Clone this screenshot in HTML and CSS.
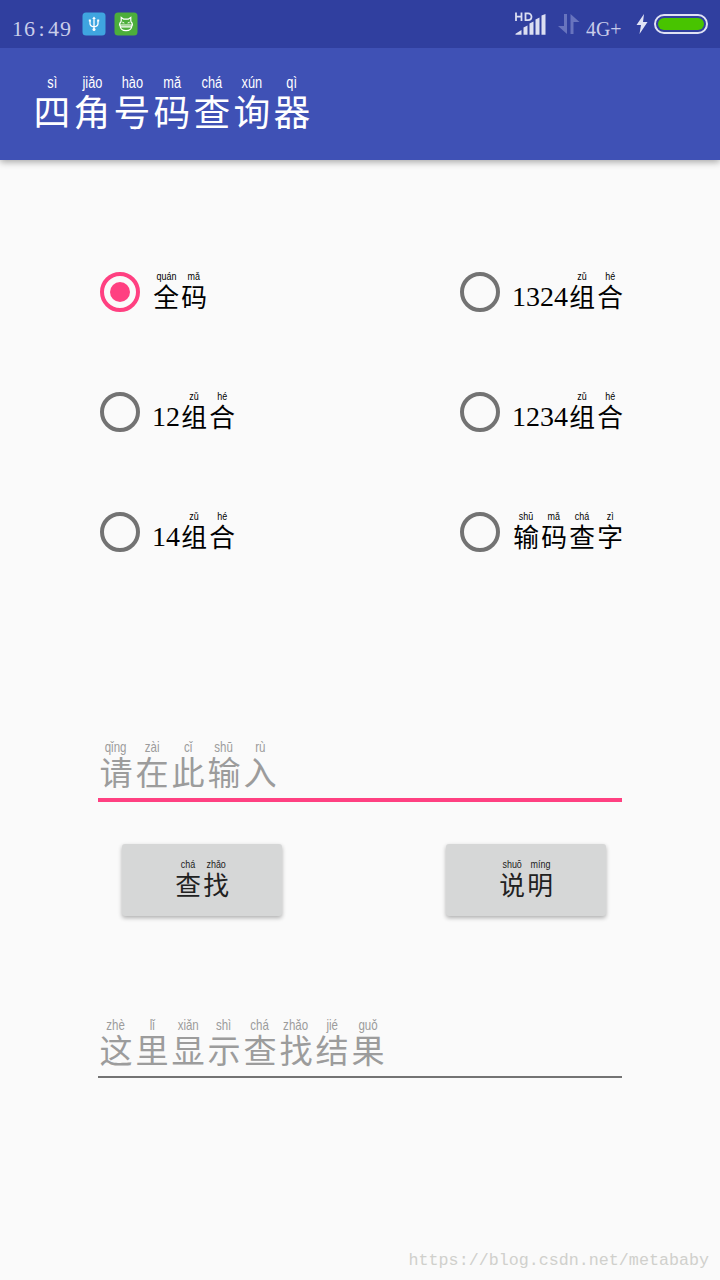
FILE: index.html
```html
<!DOCTYPE html>
<html lang="zh-CN">
<head>
    <meta charset="UTF-8">
    <title>四角号码查询器</title>
    <link rel="stylesheet" href="styles.css">
</head>
<body>
    <div class="status-bar">
        <span class="clock">16<span class="colon">:</span>49</span>
        <svg class="app-icon" width="24" height="24" viewBox="0 0 24 24">
            <rect x="0.5" y="0.5" width="23" height="23" rx="3.5" fill="#3fa5e0" />
            <path d="M12 6v12M8 8.500v3q0 3 4 3.300q4-.3 4-3.300v-3" fill="none" stroke="#fff" stroke-width="1.300" />
            <path d="M12 4.500l1.800 2.500h-3.600zM6.800 7.500h2v2h-2zM15.200 7.500h2v2h-2z" fill="#fff" />
            <circle cx="12" cy="17.500" r="1.500" fill="#fff" />
        </svg>
        <svg class="app-icon" width="24" height="24" viewBox="0 0 24 24">
            <rect x="0.5" y="0.5" width="23" height="23" rx="3.5" fill="#4cae3b" />
            <path d="M7.200 9.500V5.500l2.500 1.700h4.600l2.500-1.700v4M7.200 9.500Q5.500 11 5.500 13h13Q18.500 11 16.800 9.500M6 13.500Q6.500 18.700 12 18.700T18 13.500M6.500 14.800h11" fill="none" stroke="#fff" stroke-width="1.200" />
            <path d="M8.500 9.500l2.500 1.800H8.500zM15.500 9.500L13 11.300h2.500z" fill="#fff" />
        </svg>
        <span class="spacer"></span>
        <svg class="signal" width="32" height="26" viewBox="0 0 32 26">
            <path d="M1 .5v8.500M6.500 .5v8.500M1 4.700h5.500M10.500 1.400v6.700h2.500c2 0 3.500-1.300 3.500-3.300s-1.500-3.400-3.500-3.400z" fill="none" stroke="#dcdff2" stroke-width="1.800" />
            <path d="M.5 22.800v-1l6-3.800v4.800zM8.500 15.500l4-2v9.300h-4zM14.500 11.500l4-2v13.300h-4zM20.500 7.500l4-2v17.300h-4zM26.500 3.500l4-1.500v20.800h-4z" fill="#dcdff2" />
        </svg>
        <svg class="arrows" width="22" height="20" viewBox="0 0 22 20">
            <path d="M6 0h3v20L0 12h6zM12.500 0l9 8h-6v12h-3z" fill="#6874be" />
        </svg>
        <span class="network"><span class="narrow">4G+</span></span>
        <svg class="bolt" width="12" height="20" viewBox="0 0 12 20">
            <path d="M8 0L.5 11h4.500L3.500 20 11.500 8H7z" fill="#e2e4f5" />
        </svg>
        <span class="battery"><span class="level"></span></span>
    </div>

    <header class="app-bar">
        <h1 class="pinyin-text">
            <span class="zi"><span class="py">sì</span><span class="hz">四</span></span>
            <span class="zi"><span class="py">jiǎo</span><span class="hz">角</span></span>
            <span class="zi"><span class="py">hào</span><span class="hz">号</span></span>
            <span class="zi"><span class="py">mǎ</span><span class="hz">码</span></span>
            <span class="zi"><span class="py">chá</span><span class="hz">查</span></span>
            <span class="zi"><span class="py">xún</span><span class="hz">询</span></span>
            <span class="zi"><span class="py">qì</span><span class="hz">器</span></span>
        </h1>
    </header>

    <main>
        <div class="options">
            <div class="option">
                <span class="radio checked"></span>
                <span class="pinyin-text">
                    <span class="zi"><span class="py">quán</span><span class="hz">全</span></span>
                    <span class="zi"><span class="py">mǎ</span><span class="hz">码</span></span>
                </span>
            </div>
            <div class="option">
                <span class="radio"></span>
                <span class="pinyin-text">
                    <span class="num">1324</span>
                    <span class="zi"><span class="py">zǔ</span><span class="hz">组</span></span>
                    <span class="zi"><span class="py">hé</span><span class="hz">合</span></span>
                </span>
            </div>
            <div class="option">
                <span class="radio"></span>
                <span class="pinyin-text">
                    <span class="num">12</span>
                    <span class="zi"><span class="py">zǔ</span><span class="hz">组</span></span>
                    <span class="zi"><span class="py">hé</span><span class="hz">合</span></span>
                </span>
            </div>
            <div class="option">
                <span class="radio"></span>
                <span class="pinyin-text">
                    <span class="num">1234</span>
                    <span class="zi"><span class="py">zǔ</span><span class="hz">组</span></span>
                    <span class="zi"><span class="py">hé</span><span class="hz">合</span></span>
                </span>
            </div>
            <div class="option">
                <span class="radio"></span>
                <span class="pinyin-text">
                    <span class="num">14</span>
                    <span class="zi"><span class="py">zǔ</span><span class="hz">组</span></span>
                    <span class="zi"><span class="py">hé</span><span class="hz">合</span></span>
                </span>
            </div>
            <div class="option">
                <span class="radio"></span>
                <span class="pinyin-text">
                    <span class="zi"><span class="py">shū</span><span class="hz">输</span></span>
                    <span class="zi"><span class="py">mǎ</span><span class="hz">码</span></span>
                    <span class="zi"><span class="py">chá</span><span class="hz">查</span></span>
                    <span class="zi"><span class="py">zì</span><span class="hz">字</span></span>
                </span>
            </div>
        </div>

        <div class="field focused">
            <span class="pinyin-text">
                <span class="zi"><span class="py">qǐng</span><span class="hz">请</span></span>
                <span class="zi"><span class="py">zài</span><span class="hz">在</span></span>
                <span class="zi"><span class="py">cǐ</span><span class="hz">此</span></span>
                <span class="zi"><span class="py">shū</span><span class="hz">输</span></span>
                <span class="zi"><span class="py">rù</span><span class="hz">入</span></span>
            </span>
        </div>

        <div class="buttons">
            <button type="button">
                <span class="pinyin-text">
                    <span class="zi"><span class="py">chá</span><span class="hz">查</span></span>
                    <span class="zi"><span class="py">zhǎo</span><span class="hz">找</span></span>
                </span>
            </button>
            <button type="button">
                <span class="pinyin-text">
                    <span class="zi"><span class="py">shuō</span><span class="hz">说</span></span>
                    <span class="zi"><span class="py">míng</span><span class="hz">明</span></span>
                </span>
            </button>
        </div>

        <div class="field">
            <span class="pinyin-text">
                <span class="zi"><span class="py">zhè</span><span class="hz">这</span></span>
                <span class="zi"><span class="py">lǐ</span><span class="hz">里</span></span>
                <span class="zi"><span class="py">xiǎn</span><span class="hz">显</span></span>
                <span class="zi"><span class="py">shì</span><span class="hz">示</span></span>
                <span class="zi"><span class="py">chá</span><span class="hz">查</span></span>
                <span class="zi"><span class="py">zhǎo</span><span class="hz">找</span></span>
                <span class="zi"><span class="py">jié</span><span class="hz">结</span></span>
                <span class="zi"><span class="py">guǒ</span><span class="hz">果</span></span>
            </span>
        </div>
    </main>

    <footer>https://blog.csdn.net/metababy</footer>
</body>
</html>
```
FILE: styles.css
```css
* {
    box-sizing: border-box;
}

body {
    margin: 0;
    height: 1280px;
    display: flex;
    flex-direction: column;
    background-color: #fafafa;
    color: #000;
    font-family: "Liberation Serif", "Noto Sans CJK SC", serif;
    overflow: hidden;
}

.status-bar {
    display: flex;
    align-items: flex-start;
    height: 48px;
    padding: 12px 12px 0;
    background-color: #303f9f;
    color: #c9cdea;
}

.clock {
    width: 70px;
    padding-top: 5px;
    font-size: 22px;
    line-height: 24px;
    letter-spacing: 1px;
}

.colon {
    display: inline-block;
    width: 12px;
    text-align: center;
}

.app-icon {
    margin-right: 8px;
}

.spacer {
    flex: 1;
}

.signal {
    margin-right: 11px;
}

.arrows {
    margin: 2px 6px 0 0;
}

.network {
    width: 50px;
    padding-top: 5px;
    font-size: 22px;
    line-height: 24px;
}

.narrow {
    display: inline-block;
    transform: scaleX(0.9);
    transform-origin: left;
}

.bolt {
    margin: 2px 6px 0 0;
}

.battery {
    width: 54px;
    height: 20px;
    margin: 2px 0 0;
    padding: 2px;
    border: 2px solid #dfe2f4;
    border-radius: 10px;
}

.level {
    display: block;
    height: 12px;
    border-radius: 6px;
    background-color: #48c400;
}

.app-bar {
    height: 112px;
    padding: 27px 32px 0;
    background-color: #3f51b5;
    color: #fff;
    box-shadow: 0 2px 7px rgba(0, 0, 0, 0.35);
    clip-path: inset(0 0 -12px 0);
}

/* every character sits in a 1em cell, pinyin above it */
.pinyin-text {
    display: flex;
    align-items: flex-end;
    margin: 0;
    font-size: 28px;
    font-weight: normal;
}

.zi {
    display: flex;
    flex-direction: column;
    align-items: center;
    width: 1em;
    height: 1.4em;
}

.py {
    font-family: "Liberation Sans", sans-serif;
    font-size: 0.4em;
    line-height: 1.05;
    white-space: nowrap;
    transform: scaleX(0.8);
}

.hz {
    font-family: "Noto Sans CJK SC", sans-serif;
    font-size: 0.92em;
    line-height: 0.98;
}

.num {
    line-height: 29px;
}

.app-bar .pinyin-text {
    font-size: 40px;
}

main {
    flex: 1;
    padding: 72px 98px 0;
}

.options {
    display: grid;
    grid-template-columns: 360px 1fr;
    grid-auto-rows: 120px;
    margin-bottom: 147px;
}

.option {
    display: flex;
    align-items: center;
    padding-left: 2px;
    white-space: nowrap;
}

.option .pinyin-text {
    margin-bottom: 2px;
}

.radio {
    display: flex;
    flex-shrink: 0;
    width: 40px;
    height: 40px;
    margin-right: 12px;
    border: 4px solid #737373;
    border-radius: 50%;
}

.radio.checked {
    border-color: #ff4081;
}

.radio.checked::before {
    content: "";
    width: 20px;
    height: 20px;
    margin: auto;
    border-radius: 50%;
    background-color: #ff4081;
}

.field {
    height: 61px;
    padding-top: 1px;
    border-bottom: 2px solid #737373;
    color: #9c9c9c;
}

.field.focused {
    height: 63px;
    border-bottom: 4px solid #ff4081;
}

.field .pinyin-text {
    font-size: 36px;
}

.buttons {
    display: flex;
    justify-content: space-between;
    margin-bottom: 101px;
    padding: 42px 16px 0 24px;
}

button {
    display: flex;
    align-items: flex-start;
    justify-content: center;
    width: 160px;
    height: 72px;
    padding: 15px 0 0;
    border: none;
    border-radius: 3px;
    background-color: #d6d7d7;
    color: #212121;
    box-shadow: 0 2px 4px rgba(0, 0, 0, 0.3);
}

footer {
    padding: 0 11px 7px 0;
    color: #d0d0cc;
    font-family: "Liberation Mono", monospace;
    font-size: 16.7px;
    line-height: 24px;
    text-align: right;
}
```
